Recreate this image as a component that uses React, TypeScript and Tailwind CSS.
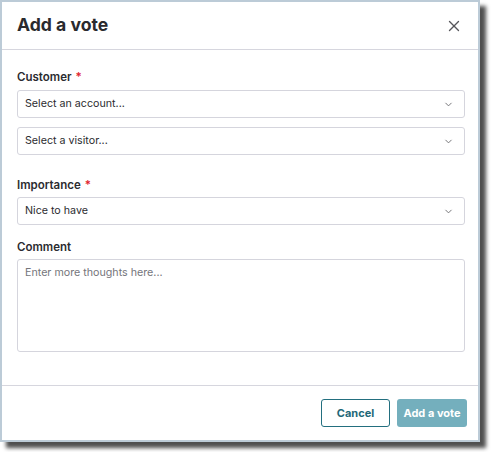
import { X, ChevronDown } from "lucide-react";

function Label({ text, required }: { text: string; required?: boolean }) {
  return (
    <div className="h-[16px] text-[11.5px] leading-[16px] font-semibold text-[#2b2b30]">
      {text}
      {required && <span className="ml-[4px] text-[#e0212b]">*</span>}
    </div>
  );
}

function Select({ value }: { value: string }) {
  return (
    <div className="flex h-[28px] items-center justify-between rounded-[3px] border border-[#d5d5dd] bg-white pl-[7px] pr-[10px]">
      <span className="text-[10.7px] text-[#2c2c30]">{value}</span>
      <ChevronDown size={11} strokeWidth={2} className="text-[#6b6b70]" />
    </div>
  );
}

export default function App() {
  return (
    <div
      className="h-[452px] w-[491px] bg-white"
      style={{ fontFamily: "Inter, 'Liberation Sans', sans-serif" }}
    >
      <div className="flex h-[442px] w-[480px] flex-col border-2 border-[#bccbd7] bg-white shadow-[6px_6px_4px_rgba(20,20,20,0.75)]">
        {/* header */}
        <div className="flex h-[48px] items-center justify-between border-b border-[#d6d6de] pl-[15px] pr-[15px]">
          <h2 className="text-[17.6px] font-bold text-[#2a2a2e]">Add a vote</h2>
          <X size={18} strokeWidth={1.8} className="text-[#56565b]" />
        </div>

        {/* body */}
        <div className="flex flex-1 flex-col pl-[15px] pr-[13px] pt-[19px]">
          <Label text="Customer" required />
          <div className="mt-[5px] flex flex-col gap-[9px]">
            <Select value="Select an account..." />
            <Select value="Select a visitor..." />
          </div>

          <div className="mt-[22px]">
            <Label text="Importance" required />
          </div>
          <div className="mt-[4px]">
            <Select value="Nice to have" />
          </div>

          <div className="mt-[14px]">
            <Label text="Comment" />
          </div>
          <textarea
            placeholder="Enter more thoughts here..."
            className="mt-[4px] h-[93px] resize-none rounded-[3px] border border-[#d5d5dd] px-[7px] py-[5px] text-[10.7px] text-[#2c2c30] placeholder:text-[#75757b] outline-none"
          />
        </div>

        {/* footer */}
        <div className="flex items-center justify-end gap-[7px] border-t border-[#d6d6de] pb-[13px] pr-[11px] pt-[13px]">
          <button className="h-[28px] w-[69px] rounded-[3px] border border-[#236f7f] bg-white text-[11px] font-bold text-[#1f6878]">
            Cancel
          </button>
          <button className="h-[28px] w-[70px] rounded-[3px] bg-[#74afbd] text-[11px] font-bold text-white">
            Add a vote
          </button>
        </div>
      </div>
    </div>
  );
}
